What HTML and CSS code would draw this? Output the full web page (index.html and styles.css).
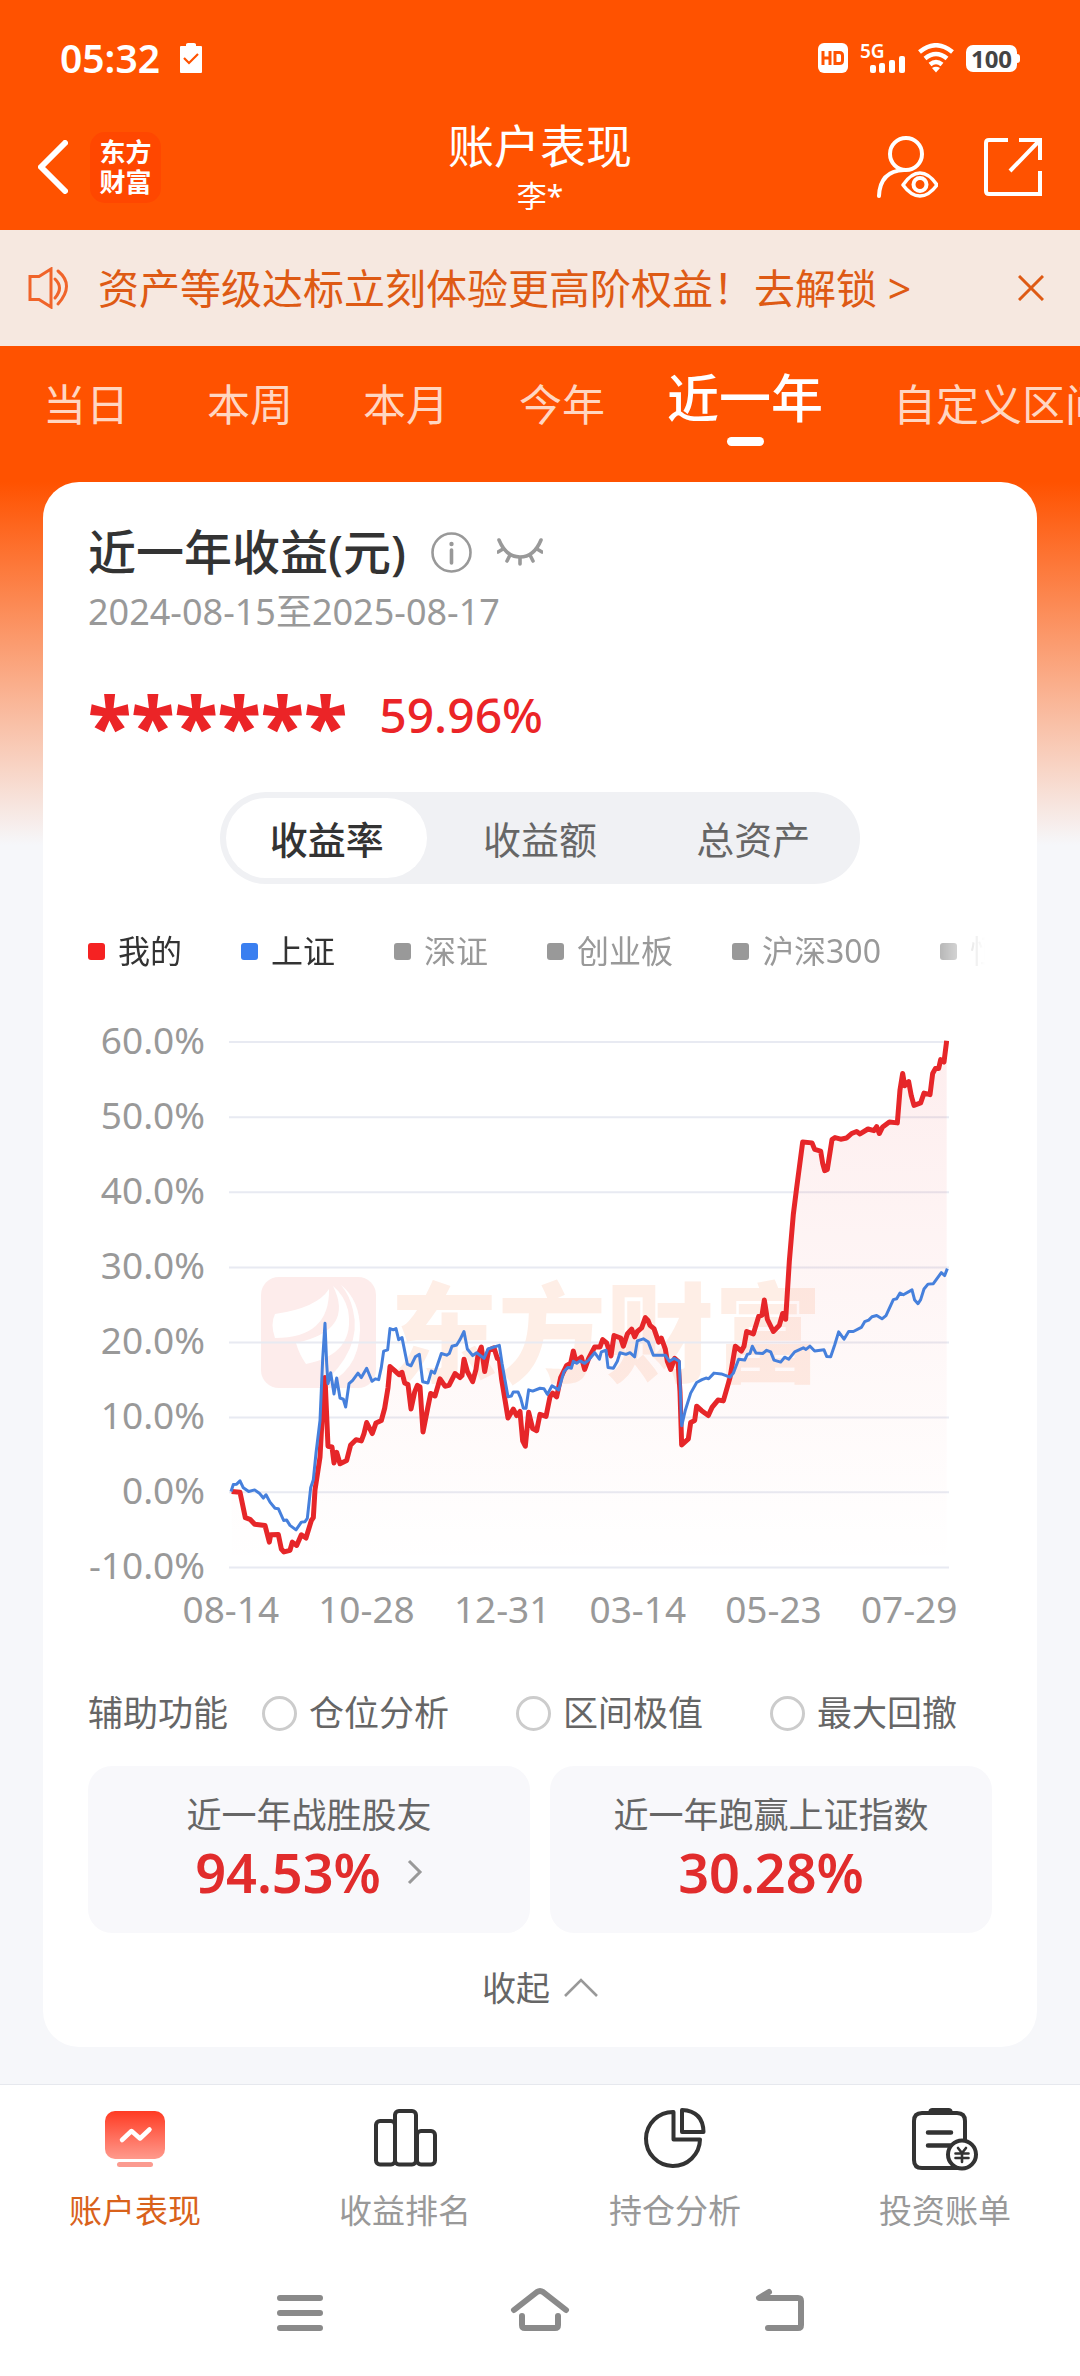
FILE: index.html
```html
<!DOCTYPE html>
<html lang="zh-CN">
<head>
<meta charset="utf-8">
<meta name="viewport" content="width=device-width, initial-scale=1">
<title>账户表现</title>
<link rel="stylesheet" href="styles.css">
</head>
<body>
<div class="page">
  <div class="statusbar">
    <div class="status-left">
      <span class="clock">05:32</span>
      <svg width="22" height="30" viewBox="0 0 22 30"><path d="M1 3h5V1.500Q6 0 8 0h6q2 0 2 1.500V3h5q1 0 1 1v25q0 1-1 1H1q-1 0-1-1V4q0-1 1-1z" fill="#fff"/><path d="M4 15l5 5 9-9" fill="none" stroke="#ff5200" stroke-width="2.200"/></svg>
    </div>
    <div class="status-right">
      <svg width="30" height="30" viewBox="0 0 30 30"><rect width="30" height="30" rx="6" fill="#fff"/><path d="M5 8v14M12 8v14M5 15h7M17 9.500h4.500q3 0 3 3v5q0 3-3 3H17z" fill="none" stroke="#ff5200" stroke-width="3"/></svg>
      <div class="signal">
        <span class="net">5G</span>
        <svg width="46" height="30" viewBox="0 0 46 30"><g fill="#fff"><rect x="10" y="22" width="6" height="8" rx="2"/><rect x="19" y="20" width="6" height="10" rx="2"/><rect x="29" y="17" width="6" height="13" rx="2"/><rect x="39" y="13" width="6" height="17" rx="2"/></g></svg>
      </div>
      <svg width="36" height="30" viewBox="0 0 36 30"><g fill="none" stroke="#fff" stroke-width="4.500"><path d="M1.500 9Q18-4.500 34.500 9"/><path d="M7 15.500q11-9 22 0"/><path d="M12 21.500q6-5 12 0"/></g><path d="M14 25q4-2.500 8 0l-4 4.500z" fill="#fff"/></svg>
      <div class="battery">100</div>
    </div>
  </div>

  <header class="header">
    <div class="header-left">
      <button class="icon-btn" aria-label="返回"><svg width="30" height="54" viewBox="0 0 30 54"><path d="M27 3L3 27l24 24" fill="none" stroke="#fff" stroke-width="6" stroke-linecap="round" stroke-linejoin="round"/></svg></button>
      <div class="brand">东方<br>财富</div>
    </div>
    <div class="header-title">
      <h1>账户表现</h1>
      <p>李*</p>
    </div>
    <div class="header-right">
      <button class="icon-btn" aria-label="账户"><svg width="62" height="62" viewBox="0 0 62 62"><g fill="none" stroke="#fff" stroke-width="4"><circle cx="30" cy="18" r="16"/><path d="M3 60Q4 35 28 34" stroke-linecap="round"/><path d="M27 49q8-12 17-12t17 12q-8 11-17 11T27 49z" stroke-width="3.500" stroke-linejoin="round"/><circle cx="44" cy="48.500" r="6.500"/></g></svg></button>
      <button class="icon-btn" aria-label="分享"><svg width="58" height="58" viewBox="0 0 58 58"><path d="M24 2H5Q2 2 2 5v48q0 3 3 3h51V33M35 2h21v20M55 3L26 33" fill="none" stroke="#fff" stroke-width="4"/></svg></button>
    </div>
  </header>

  <div class="notice">
    <svg width="41" height="42" viewBox="0 0 41 42"><g fill="none" stroke="#f0642a" stroke-width="3"><path d="M2 9.500h9L23 2v38l-12-7.500H2z"/><path d="M27 12q9 8.500 0 19M30 4q17 14 0 33" stroke-linecap="round"/></g></svg>
    <p class="notice-text">资产等级达标立刻体验更高阶权益！<a href="#">去解锁 &gt;</a></p>
    <button class="icon-btn" aria-label="关闭"><svg width="26" height="26" viewBox="0 0 26 26"><path d="M1 1l24 24M25 1L1 25" stroke="#de5a14" stroke-width="3" fill="none"/></svg></button>
  </div>

  <nav class="tabs">
    <button>当日</button>
    <button>本周</button>
    <button>本月</button>
    <button>今年</button>
    <button class="active">近一年</button>
    <button>自定义区间</button>
  </nav>

  <main class="main">
    <section class="card">
      <div class="title-row">
        <h2>近一年收益(元)</h2>
        <svg width="41" height="41" viewBox="0 0 41 41"><circle cx="20.500" cy="20.500" r="19" fill="none" stroke="#999" stroke-width="2.600"/><path d="M20.500 18v13" stroke="#999" stroke-width="3.600" stroke-linecap="round"/><circle cx="20.500" cy="12" r="2.200" fill="#999"/></svg>
        <svg width="46" height="28" viewBox="0 0 46 28"><g fill="none" stroke="#999" stroke-width="3.600" stroke-linecap="round"><path d="M2 2q7 17 21 17T44 2"/><path d="M6 11l-5 3M13 17l-3 6M23 20v6M33 17l3 6M40 11l5 3"/></g></svg>
      </div>
      <p class="range">2024-08-15至2025-08-17</p>
      <div class="profit"><span class="masked">******</span><span class="rate">59.96%</span></div>

      <div class="segmented">
        <button class="active">收益率</button>
        <button>收益额</button>
        <button>总资产</button>
      </div>

      <ul class="legend">
        <li class="mine">我的</li>
        <li class="sh">上证</li>
        <li>深证</li>
        <li>创业板</li>
        <li>沪深300</li>
        <li>恒生</li>
      </ul>

      <div class="chart">
        <div class="y-axis">
          <span>60.0%</span><span>50.0%</span><span>40.0%</span><span>30.0%</span><span>20.0%</span><span>10.0%</span><span>0.0%</span><span>-10.0%</span>
        </div>
        <div class="plot">
          <svg class="watermark" viewBox="0 0 720 565" preserveAspectRatio="xMinYMin meet">
            <rect x="32" y="257" width="115" height="111" rx="18" fill="#fdeceb"/>
            <g fill="#fff">
              <path d="M100 269Q88 288 46 294Q41 304 46 318Q101 318 100 269z"/>
              <path d="M104 266Q126 310 67 323Q70 334 77 344Q127 334 119 290Q115 275 104 266z"/>
              <path d="M112 265Q131 280 131 310Q130 354 90 367Q134 330 124 290Q121 276 112 265z"/>
            </g>
            <text x="161" y="354" class="wm-text">东方财富</text>
          </svg>
          <svg class="lines" viewBox="507 49 2160 1384" preserveAspectRatio="none">
            <defs><linearGradient id="area" x1="0" y1="0" x2="0" y2="1"><stop offset="0" stop-color="#eb2427" stop-opacity=".08"/><stop offset="1" stop-color="#eb2427" stop-opacity="0"/></linearGradient></defs>
            <path class="grid" d="M507 103H2667M507 287H2667M507 471H2667M507 655H2667M507 839H2667M507 1023H2667M507 1206H2667M507 1390H2667"/>
            <path fill="url(#area)" d="M515 1204L540 1206 556 1268 570 1272 584 1284 615 1287 628 1328 632 1310 655 1309 664 1345 672 1352 690 1348 697 1328 710 1336 724 1310 738 1318 754 1275 760 1268 765 1200 780 1120 788 1000 795 925 799 1000 804 1093 816 1095 822 1134 830 1108 840 1136 860 1128 872 1090 888 1077 904 1080 912 1062 920 1035 937 1062 948 1036 964 1030 974 1000 984 950 990 898 1004 908 1017 918 1026 912 1034 938 1044 942 1053 1002 1064 960 1072 944 1080 948 1089 1058 1103 1000 1112 964 1125 970 1140 928 1155 946 1167 944 1185 915 1200 925 1206 920 1212 880 1222 910 1238 935 1248 905 1254 870 1264 850 1274 910 1286 858 1302 852 1312 878 1318 880 1325 930 1344 1024 1360 1002 1370 1018 1380 1008 1388 1080 1396 1093 1406 1010 1418 1050 1430 1055 1440 1015 1458 1020 1470 972 1478 963 1490 972 1502 925 1520 895 1532 890 1540 860 1548 885 1564 875 1574 905 1586 878 1604 850 1620 850 1628 832 1640 840 1653 872 1662 822 1682 828 1690 848 1702 818 1715 806 1724 825 1732 812 1745 803 1756 778 1764 785 1770 797 1782 805 1796 838 1804 828 1816 855 1822 885 1832 905 1844 878 1854 885 1860 960 1865 1090 1885 1075 1892 1035 1904 1030 1910 995 1925 1006 1945 1018 1956 998 1974 980 1990 982 2010 925 2026 848 2044 860 2052 848 2060 812 2080 818 2096 775 2106 772 2113 735 2122 782 2140 812 2158 797 2168 768 2177 782 2188 640 2200 525 2210 460 2228 348 2256 350 2264 366 2282 370 2288 400 2294 418 2302 415 2316 342 2325 337 2342 341 2360 338 2375 327 2390 322 2400 328 2424 316 2442 320 2450 310 2458 327 2468 311 2488 299 2512 301 2520 220 2528 180 2534 210 2546 200 2554 235 2562 258 2582 252 2592 228 2610 232 2618 180 2626 168 2636 168 2642 146 2652 152 2660 100V1390H515z"/>
            <path class="line-mine" d="M515 1204L540 1206 556 1268 570 1272 584 1284 615 1287 628 1328 632 1310 655 1309 664 1345 672 1352 690 1348 697 1328 710 1336 724 1310 738 1318 754 1275 760 1268 765 1200 780 1120 788 1000 795 925 799 1000 804 1093 816 1095 822 1134 830 1108 840 1136 860 1128 872 1090 888 1077 904 1080 912 1062 920 1035 937 1062 948 1036 964 1030 974 1000 984 950 990 898 1004 908 1017 918 1026 912 1034 938 1044 942 1053 1002 1064 960 1072 944 1080 948 1089 1058 1103 1000 1112 964 1125 970 1140 928 1155 946 1167 944 1185 915 1200 925 1206 920 1212 880 1222 910 1238 935 1248 905 1254 870 1264 850 1274 910 1286 858 1302 852 1312 878 1318 880 1325 930 1344 1024 1360 1002 1370 1018 1380 1008 1388 1080 1396 1093 1406 1010 1418 1050 1430 1055 1440 1015 1458 1020 1470 972 1478 963 1490 972 1502 925 1520 895 1532 890 1540 860 1548 885 1564 875 1574 905 1586 878 1604 850 1620 850 1628 832 1640 840 1653 872 1662 822 1682 828 1690 848 1702 818 1715 806 1724 825 1732 812 1745 803 1756 778 1764 785 1770 797 1782 805 1796 838 1804 828 1816 855 1822 885 1832 905 1844 878 1854 885 1860 960 1865 1090 1885 1075 1892 1035 1904 1030 1910 995 1925 1006 1945 1018 1956 998 1974 980 1990 982 2010 925 2026 848 2044 860 2052 848 2060 812 2080 818 2096 775 2106 772 2113 735 2122 782 2140 812 2158 797 2168 768 2177 782 2188 640 2200 525 2210 460 2228 348 2256 350 2264 366 2282 370 2288 400 2294 418 2302 415 2316 342 2325 337 2342 341 2360 338 2375 327 2390 322 2400 328 2424 316 2442 320 2450 310 2458 327 2468 311 2488 299 2512 301 2520 220 2528 180 2534 210 2546 200 2554 235 2562 258 2582 252 2592 228 2610 232 2618 180 2626 168 2636 168 2642 146 2652 152 2660 100"/>
            <path class="line-sh" d="M513 1204L520 1187 530 1186 540 1178 550 1195 566 1204 584 1200 598 1208 610 1220 618 1212 630 1230 645 1245 655 1246 671 1275 680 1274 690 1287 708 1298 724 1279 735 1278 742 1270 752 1195 760 1175 768 1110 780 1030 788 880 795 792 800 890 804 940 812 913 822 965 830 926 840 975 850 978 857 997 867 940 878 932 894 914 904 925 920 902 936 934 946 928 956 930 964 900 971 860 983 857 990 805 1000 808 1008 805 1016 832 1026 827 1042 892 1053 896 1066 874 1078 868 1088 935 1104 938 1114 909 1124 914 1144 866 1160 870 1168 866 1176 848 1190 845 1200 832 1212 812 1222 855 1238 871 1250 864 1272 878 1284 855 1318 846 1326 890 1344 972 1354 970 1360 960 1374 960 1382 975 1390 1000 1398 1000 1406 955 1418 958 1440 951 1452 952 1462 966 1476 945 1496 955 1512 910 1524 900 1534 902 1540 885 1550 890 1560 884 1574 890 1586 882 1604 864 1618 880 1624 862 1638 858 1644 900 1660 902 1672 885 1680 864 1698 868 1710 864 1724 874 1732 835 1750 830 1765 838 1780 870 1816 870 1828 885 1842 878 1858 885 1865 1043 1876 1005 1892 963 1910 937 1926 930 1938 926 1946 928 1962 914 1984 916 2010 924 2020 914 2036 880 2054 882 2062 868 2070 866 2077 848 2088 865 2108 866 2120 858 2132 862 2142 882 2162 887 2174 875 2186 880 2204 862 2230 852 2238 856 2250 848 2264 860 2292 857 2300 873 2312 874 2324 845 2336 813 2352 831 2366 812 2380 812 2404 802 2414 788 2426 784 2436 776 2450 773 2466 781 2478 773 2500 734 2510 732 2520 718 2530 722 2556 710 2564 735 2574 744 2582 734 2592 708 2604 696 2620 695 2644 668 2654 675 2662 658"/>
          </svg>
        </div>
      </div>
      <div class="x-axis"><span>08-14</span><span>10-28</span><span>12-31</span><span>03-14</span><span>05-23</span><span>07-29</span></div>

      <div class="assist">
        <span>辅助功能</span>
        <div class="assist-options">
          <label><input type="radio" name="assist">仓位分析</label>
          <label><input type="radio" name="assist">区间极值</label>
          <label><input type="radio" name="assist">最大回撤</label>
        </div>
      </div>

      <div class="stats">
        <a class="stat" href="#">
          <span>近一年战胜股友</span>
          <strong>94.53%<svg width="16" height="26" viewBox="0 0 16 26"><path d="M2 2l11 11L2 24" fill="none" stroke="#999" stroke-width="3"/></svg></strong>
        </a>
        <div class="stat">
          <span>近一年跑赢上证指数</span>
          <strong>30.28%</strong>
        </div>
      </div>

      <button class="collapse">收起<svg width="34" height="20" viewBox="0 0 34 20"><path d="M1 18L17 2l16 16" fill="none" stroke="#999" stroke-width="2.600"/></svg></button>
    </section>
  </main>

  <footer class="footer">
    <nav class="bottom-nav">
      <a class="active" href="#">
        <svg width="66" height="66" viewBox="0 0 66 66"><defs><linearGradient id="red" x1="0" y1="0" x2="0" y2="1"><stop offset="0" stop-color="#ff3b23"/><stop offset="1" stop-color="#ff9a8d"/></linearGradient></defs><rect x="3" y="6" width="60" height="48" rx="10" fill="url(#red)"/><rect x="15" y="57" width="36" height="5" rx="2.500" fill="#fb9b90"/><path d="M20 35l9.500-9 8.500 7.500 9.500-9" fill="none" stroke="#fff" stroke-width="4.500" stroke-linecap="round" stroke-linejoin="round"/></svg>
        账户表现
      </a>
      <a href="#">
        <svg width="66" height="66" viewBox="0 0 66 66"><g fill="none" stroke="#333" stroke-width="4"><rect x="4" y="16" width="19" height="43.500" rx="4"/><rect x="45" y="26" width="18" height="33.500" rx="4"/><rect x="23" y="6" width="21" height="53.500" rx="4"/></g></svg>
        收益排名
      </a>
      <a href="#">
        <svg width="66" height="66" viewBox="0 0 66 66"><g fill="none" stroke="#333" stroke-width="4" stroke-linejoin="round"><path d="M31.500 7A27 27 0 1 0 58 34.500H31.500z"/><path d="M40 5v22h21.500Q61 6 40 5z"/></g></svg>
        持仓分析
      </a>
      <a href="#">
        <svg width="66" height="66" viewBox="0 0 66 66"><g fill="none" stroke="#333" stroke-width="4" stroke-linecap="round"><path d="M53 36V16q0-8-8-8H10q-8 0-8 8v39q0 8 8 8h37"/><path d="M16 27.500h23M16 40.500h22" stroke-width="4.500"/><circle cx="50" cy="49.500" r="14" fill="#fff"/><path d="M46 43l4 5 4-5M50 48v9M43.500 48.500h13M43.500 53h13" stroke-width="2.600"/></g><path d="M16 9q0-6 4-6h17q4 0 4 6z" fill="#333"/></svg>
        投资账单
      </a>
    </nav>
    <div class="system-nav">
      <button class="icon-btn" aria-label="最近任务"><svg width="60" height="48" viewBox="0 0 60 48"><path d="M10 11h40M10 26h40M10 41h40" stroke="#8a8a8a" stroke-width="6" stroke-linecap="round"/></svg></button>
      <button class="icon-btn" aria-label="主屏幕"><svg width="60" height="48" viewBox="0 0 60 48"><path d="M4 23L27 5q3-2 6 0l23 18M12 29v9q0 3 3 3h30q3 0 3-3v-9" fill="none" stroke="#8a8a8a" stroke-width="6" stroke-linecap="round" stroke-linejoin="round"/></svg></button>
      <button class="icon-btn" aria-label="后退"><svg width="60" height="48" viewBox="0 0 60 48"><path d="M19 5L9 11h39q3 0 3 3v24q0 3-3 3H18" fill="none" stroke="#8a8a8a" stroke-width="6" stroke-linecap="round" stroke-linejoin="round"/></svg></button>
    </div>
  </footer>
</div>
</body>
</html>
```
FILE: styles.css
```css
* { box-sizing: border-box; }
body, h1, h2, p, ul { margin: 0; padding: 0; }
body {
  font-family: "Noto Sans", "Noto Sans CJK SC", sans-serif;
  background: #f6f7fa;
  color: #333;
}
button { font: inherit; color: inherit; background: none; border: 0; padding: 0; }
a { color: inherit; text-decoration: none; }
svg { display: block; flex: none; }
.icon-btn { display: block; flex: none; }

.page {
  min-height: 100vh;
  display: flex;
  flex-direction: column;
  background: linear-gradient(#ff5200 0, #ff5200 482px, #f6f7fa 845px);
}

.statusbar {
  height: 116px;
  padding: 0 60px;
  display: flex;
  align-items: center;
  justify-content: space-between;
  color: #fff;
}
.status-left, .status-right { display: flex; align-items: center; }
.status-left { gap: 20px; }
.status-right { gap: 12px; }
.clock { font-size: 39px; font-weight: 600; line-height: 48px; }
.signal { position: relative; }
.net { position: absolute; left: 0; top: 0; font-size: 19px; font-weight: 600; line-height: 16px; }
.battery {
  position: relative;
  width: 51px;
  height: 27px;
  margin-right: 3px;
  border-radius: 7px;
  background: #fff;
  color: #444;
  font-size: 24px;
  font-weight: 700;
  line-height: 27px;
  text-align: center;
}
.battery::after {
  content: "";
  position: absolute;
  right: -3px;
  top: 9px;
  width: 4px;
  height: 9px;
  border-radius: 0 3px 3px 0;
  background: #fff;
}

.header {
  display: grid;
  grid-template-columns: 1fr auto 1fr;
  align-items: center;
  padding: 0 38px 12px;
  color: #fff;
}
.header-left { display: flex; align-items: center; gap: 22px; }
.brand {
  width: 71px;
  height: 71px;
  padding: 5px 0;
  border-radius: 15px;
  background: #ff4700;
  font-size: 26px;
  font-weight: 700;
  line-height: 30px;
  text-align: center;
}
.header-title { text-align: center; }
.header-title h1 { font-size: 46px; font-weight: 400; line-height: 58px; }
.header-title p { font-size: 30px; line-height: 44px; }
.header-right { display: flex; align-items: center; justify-content: flex-end; gap: 46px; }

.notice {
  height: 116px;
  padding: 0 36px 0 28px;
  display: flex;
  align-items: center;
  gap: 29px;
  background: #f6e8e0;
  color: #de5a14;
}
.notice-text { flex: 1; font-size: 41px; line-height: 60px; white-space: nowrap; }

.tabs {
  height: 136px;
  padding-left: 43px;
  display: flex;
  align-items: flex-start;
  gap: 70px;
  overflow: hidden;
  white-space: nowrap;
  color: #ffd6c2;
  font-size: 43px;
  line-height: 118px;
}
.tabs button { flex: none; }
.tabs button:first-child { margin-right: 8px; }
.tabs .active {
  margin-left: -8px;
  padding-top: 16px;
  color: #fff;
  font-size: 52px;
  font-weight: 500;
  line-height: 72px;
}
.tabs .active::after {
  content: "";
  display: block;
  width: 37px;
  height: 9px;
  margin: 3px auto 0;
  border-radius: 5px;
  background: #fff;
}

.main { padding: 0 43px 37px; }
.card { padding: 38px 45px 35px; border-radius: 36px; background: #fff; }

.title-row { display: flex; align-items: center; gap: 25px; }
.title-row h2 { font-size: 48px; font-weight: 500; line-height: 64px; }
.range { color: #999; font-size: 36px; line-height: 56px; }

.profit {
  height: 88px;
  margin-top: 31px;
  display: flex;
  align-items: center;
  gap: 32px;
  color: #eb2427;
}
.masked { font-size: 80px; font-weight: 800; line-height: 88px; padding-top: 18px; }
.rate { font-size: 48px; font-weight: 500; line-height: 88px; }

.segmented {
  max-width: 640px;
  height: 92px;
  margin: 33px auto 0;
  display: grid;
  grid-template-columns: repeat(3, 1fr);
  border-radius: 46px;
  background: #f0f1f4;
  color: #666;
  font-size: 38px;
}
.segmented button { margin: 6px; padding-bottom: 2px; border-radius: 40px; }
.segmented .active { background: #fff; color: #333; font-weight: 500; }

.legend {
  margin: 43px 7px 0 0;
  display: flex;
  gap: 59px;
  overflow: hidden;
  list-style: none;
  color: #999;
  font-size: 32px;
  line-height: 48px;
  white-space: nowrap;
  -webkit-mask-image: linear-gradient(to left, transparent 0, #000 64px);
  mask-image: linear-gradient(to left, transparent 0, #000 64px);
}
.legend li { display: flex; flex: none; align-items: center; gap: 13px; }
.legend li::before { content: ""; width: 17px; height: 17px; border-radius: 3px; background: #999; }
.legend .mine, .legend .sh { color: #333; }
.legend .mine::before { background: #f52222; }
.legend .sh::before { background: #3a7ff0; }

.chart { display: flex; gap: 24px; margin: 45px 43px 0 0; height: 565px; }
.y-axis {
  width: 117px;
  display: flex;
  flex-direction: column;
  justify-content: space-between;
  text-align: right;
  color: #999;
  font-size: 37px;
  line-height: 40px;
}
.plot { flex: 1; display: grid; min-width: 0; }
.plot svg { grid-area: 1 / 1; width: 100%; height: 565px; }
.wm-text { font-size: 108px; font-weight: 900; fill: #feeee6; }
.lines path { vector-effect: non-scaling-stroke; }
.grid { fill: none; stroke: #e8eaf2; stroke-width: 2; }
.line-mine { fill: none; stroke: #e62629; stroke-width: 5; stroke-linejoin: round; }
.line-sh { fill: none; stroke: #4680dc; stroke-width: 3; stroke-linejoin: round; }
.x-axis {
  display: grid;
  grid-template-columns: repeat(6, 1fr);
  margin: 0 15px 0 75px;
  text-align: center;
  color: #999;
  font-size: 37px;
  line-height: 48px;
}

.assist {
  margin-top: 56px;
  display: flex;
  gap: 34px;
  color: #666;
  font-size: 35px;
  line-height: 48px;
  white-space: nowrap;
}
.assist-options { display: flex; gap: 67px; }
.assist label { display: flex; align-items: center; gap: 12px; }
.assist input {
  appearance: none;
  width: 35px;
  height: 35px;
  margin: 0;
  border: 3px solid #ccc;
  border-radius: 50%;
  background: #fff;
}

.stats { margin-top: 29px; display: grid; grid-template-columns: 1fr 1fr; gap: 20px; }
.stat {
  display: flex;
  flex-direction: column;
  align-items: center;
  padding: 25px 0 28px;
  border-radius: 24px;
  background: #f8f8fb;
  color: #666;
  font-size: 35px;
  line-height: 48px;
}
.stat strong {
  display: flex;
  align-items: center;
  gap: 26px;
  color: #e12c2c;
  font-size: 54px;
  font-weight: 600;
  line-height: 66px;
}

.collapse {
  margin: 31px auto 0;
  display: flex;
  align-items: center;
  gap: 14px;
  color: #666;
  font-size: 34px;
  line-height: 48px;
}

.footer { flex: 1; border-top: 1px solid #e6e8ee; background: #fff; }
.bottom-nav { display: grid; grid-template-columns: repeat(4, 1fr); padding-top: 20px; }
.bottom-nav a {
  display: flex;
  flex-direction: column;
  align-items: center;
  gap: 16px;
  color: #999;
  font-size: 33px;
  line-height: 48px;
}
.bottom-nav .active { color: #d9621b; }
.system-nav { display: flex; justify-content: center; gap: 180px; padding: 52px 0 41px; }
```
